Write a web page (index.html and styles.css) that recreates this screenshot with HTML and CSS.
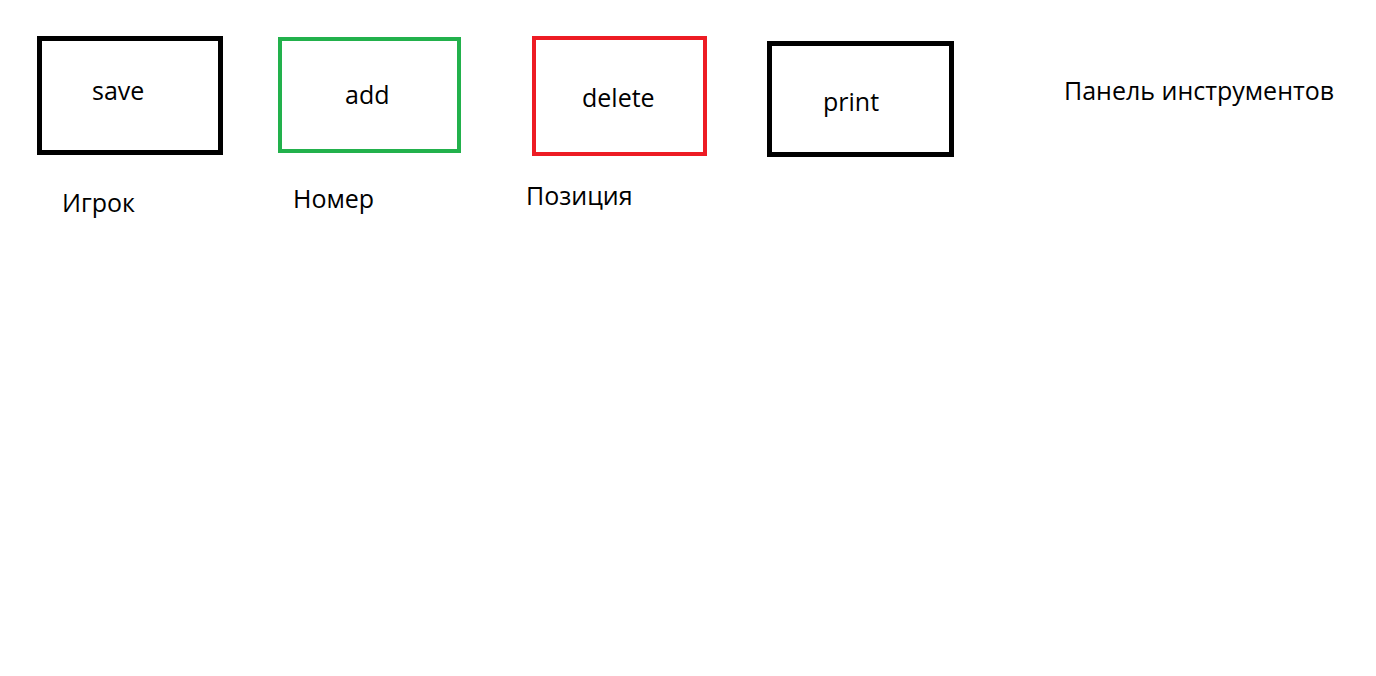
FILE: index.html
```html
<!DOCTYPE html>
<html lang="ru">
  <head>
    <meta charset="UTF-8" />
    <meta name="viewport" content="width=device-width, initial-scale=1.0" />
    <title>Панель инструментов</title>
    <link rel="stylesheet" href="styles.css">
  </head>
  <body>
    <main class="canvas">
      <div class="tool tool-save">
        <div class="tool-btn">save</div>
        <span class="tool-label">Игрок</span>
      </div>
      <div class="tool tool-add">
        <div class="tool-btn">add</div>
        <span class="tool-label">Номер</span>
      </div>
      <div class="tool tool-delete">
        <div class="tool-btn">delete</div>
        <span class="tool-label">Позиция</span>
      </div>
      <div class="tool tool-print">
        <div class="tool-btn">print</div>
      </div>
      <h1 class="panel-title">Панель инструментов</h1>
    </main>
  </body>
</html>
```

FILE: styles.css
```css
body {
  margin: 0;
  background-color: #fff;
  color: #000;
  font-family: "Open Sans", "Noto Sans", Arial, sans-serif;
}

.canvas {
  display: flex;
  align-items: flex-start;
  height: 676px;
}

.tool {
  display: flex;
  flex-direction: column;
  align-items: flex-start;
}

.tool-btn {
  box-sizing: border-box;
  border: 5px solid #000;
  font-size: 25px;
  line-height: 1;
  cursor: pointer;
}

.tool-label {
  font-size: 25px;
  line-height: 1;
}

/* save */
.tool-save {
  margin-left: 37px;
  margin-top: 36px;
}

.tool-save .tool-btn {
  width: 186px;
  height: 119px;
  padding: 37px 0 0 50px;
}

.tool-save .tool-label {
  margin-top: 35px;
  margin-left: 25px;
}

/* add */
.tool-add {
  margin-left: 55px;
  margin-top: 37px;
}

.tool-add .tool-btn {
  width: 183px;
  height: 116px;
  border: 4px solid #22b14c;
  padding: 41px 0 0 63px;
}

.tool-add .tool-label {
  margin-top: 33px;
  margin-left: 15px;
}

/* delete */
.tool-delete {
  margin-left: 71px;
  margin-top: 36px;
}

.tool-delete .tool-btn {
  width: 175px;
  height: 120px;
  border: 4px solid #ed1c24;
  padding: 45px 0 0 46px;
}

.tool-delete .tool-label {
  margin-top: 27px;
  margin-left: -6px;
}

/* print */
.tool-print {
  margin-left: 60px;
  margin-top: 41px;
}

.tool-print .tool-btn {
  width: 187px;
  height: 116px;
  padding: 43px 0 0 51px;
}

.panel-title {
  margin: 78px 0 0 110px;
  font-size: 25px;
  font-weight: normal;
  line-height: 1;
  white-space: nowrap;
}
```
